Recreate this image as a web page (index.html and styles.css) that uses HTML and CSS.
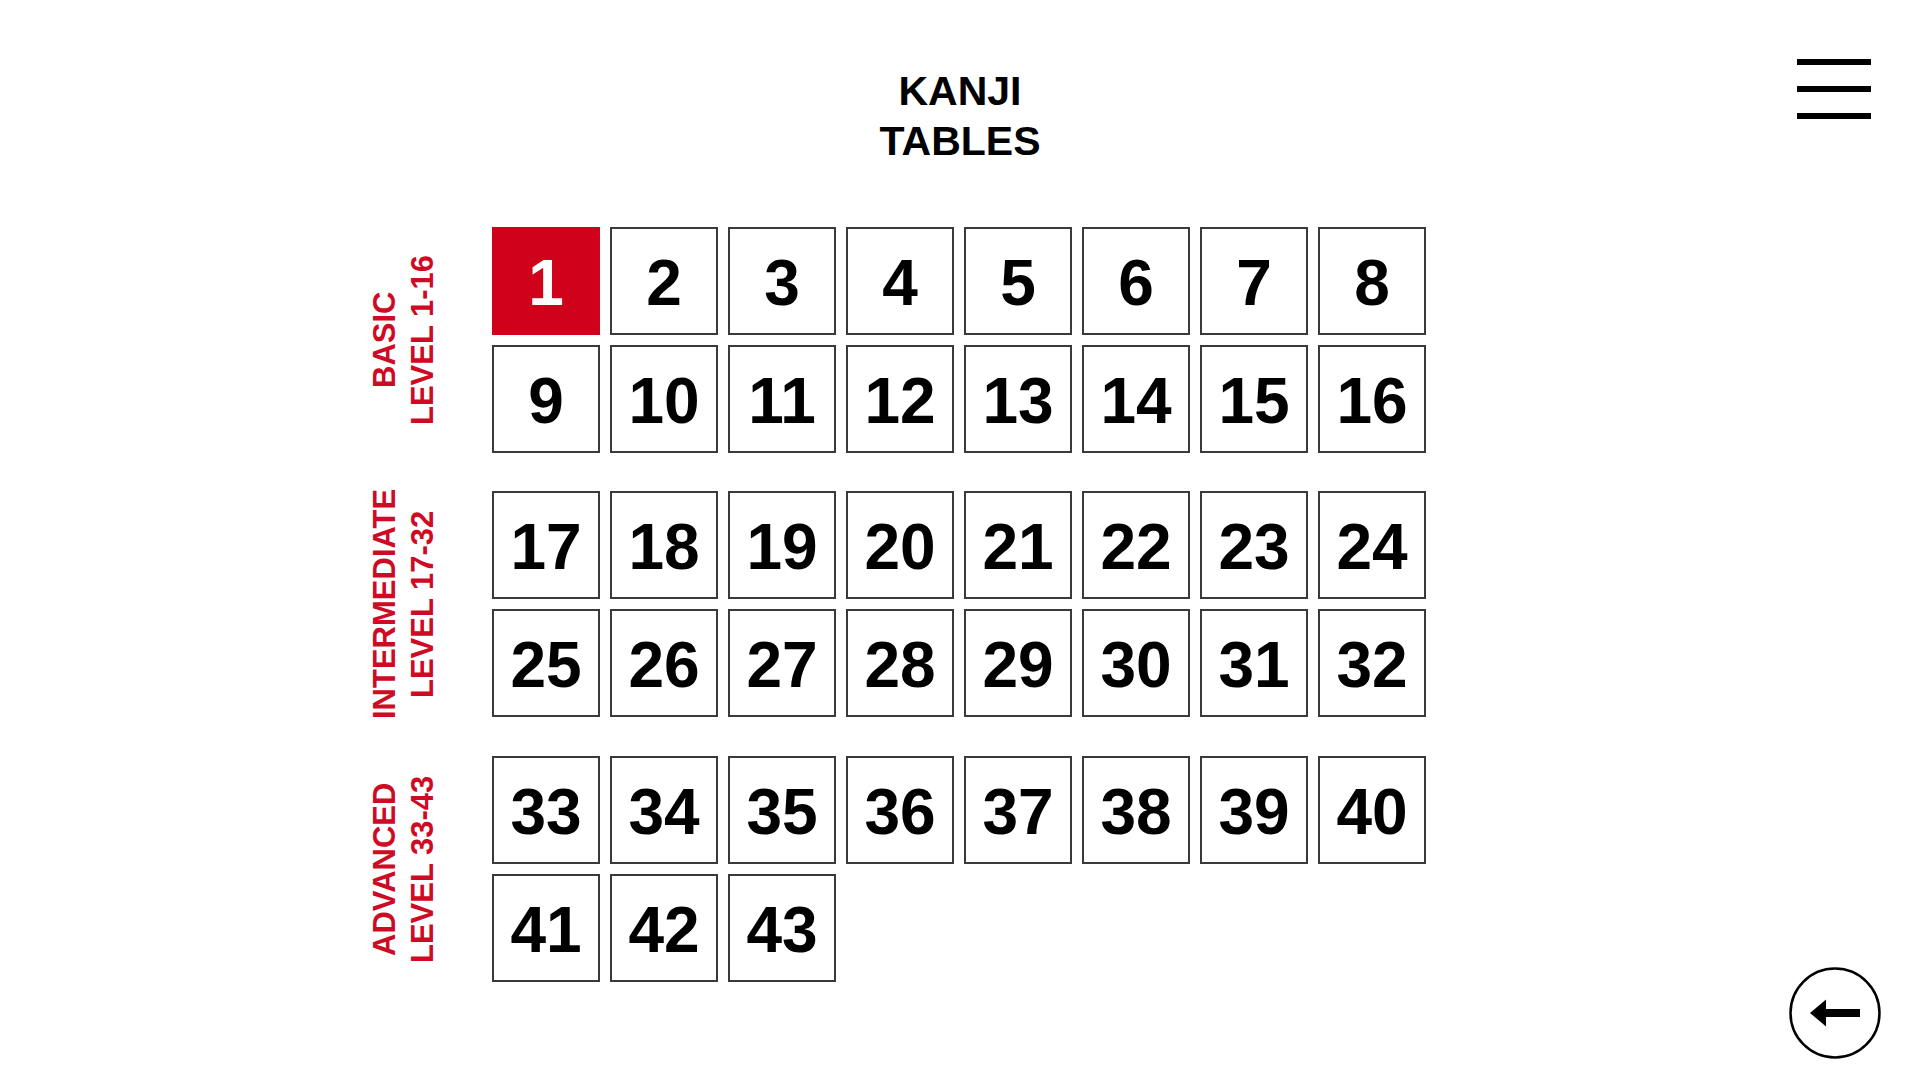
FILE: index.html
```html
<!DOCTYPE html>
<html lang="en">
<head>
<meta charset="utf-8">
<title>Kanji Tables</title>
<link rel="stylesheet" href="styles.css">
</head>
<body>
<header class="top">
  <div class="top-spacer"></div>
  <h1 class="title">KANJI<br>TABLES</h1>
  <button class="menu" aria-label="Menu"><span></span><span></span><span></span></button>
</header>
<main class="levels">
  <div class="level-label"><span>BASIC<br>LEVEL 1-16</span></div>
  <div class="tiles">
    <a class="tile active">1</a><a class="tile">2</a><a class="tile">3</a><a class="tile">4</a><a class="tile">5</a><a class="tile">6</a><a class="tile">7</a><a class="tile">8</a>
    <a class="tile">9</a><a class="tile">10</a><a class="tile">11</a><a class="tile">12</a><a class="tile">13</a><a class="tile">14</a><a class="tile">15</a><a class="tile">16</a>
  </div>
  <div class="level-label"><span>INTERMEDIATE<br>LEVEL 17-32</span></div>
  <div class="tiles">
    <a class="tile">17</a><a class="tile">18</a><a class="tile">19</a><a class="tile">20</a><a class="tile">21</a><a class="tile">22</a><a class="tile">23</a><a class="tile">24</a>
    <a class="tile">25</a><a class="tile">26</a><a class="tile">27</a><a class="tile">28</a><a class="tile">29</a><a class="tile">30</a><a class="tile">31</a><a class="tile">32</a>
  </div>
  <div class="level-label"><span>ADVANCED<br>LEVEL 33-43</span></div>
  <div class="tiles">
    <a class="tile">33</a><a class="tile">34</a><a class="tile">35</a><a class="tile">36</a><a class="tile">37</a><a class="tile">38</a><a class="tile">39</a><a class="tile">40</a>
    <a class="tile">41</a><a class="tile">42</a><a class="tile">43</a>
  </div>
</main>
<button class="back" aria-label="Back">
  <svg width="92" height="92" viewBox="0 0 92 92">
    <circle cx="46" cy="46" r="44.5" fill="#fff" stroke="#000" stroke-width="2.5"/>
    <polygon points="21,46 37,32.5 37,59.5" fill="#000"/>
    <rect x="36" y="42" width="35" height="8" fill="#000"/>
  </svg>
</button>
</body>
</html>
```

FILE: styles.css
```css
html, body {
  margin: 0;
  padding: 0;
  background: #fff;
}

body {
  font-family: "Liberation Sans", Arial, sans-serif;
  color: #000;
  width: 1920px;
  height: 1080px;
  overflow: hidden;
}

.top {
  display: grid;
  grid-template-columns: 1fr auto 1fr;
  padding: 59px 49px 0;
  align-items: start;
}

.title {
  margin: 7px 0 0;
  font-size: 41px;
  line-height: 50px;
  font-weight: 700;
  text-align: center;
}

.menu {
  justify-self: end;
  display: flex;
  flex-direction: column;
  gap: 21px;
  width: 74px;
  padding: 0;
  margin: 0;
  border: 0;
  background: transparent;
  cursor: pointer;
}

.menu span {
  display: block;
  height: 6px;
  background: #000;
}

.levels {
  display: grid;
  grid-template-columns: 1fr auto 1fr;
  grid-auto-rows: 226px;
  row-gap: 38.5px;
  margin-top: 60.5px;
  padding-right: 2px;
}

.level-label {
  grid-column: 1;
  justify-self: end;
  margin-right: 50px;
  display: flex;
  justify-content: center;
  writing-mode: vertical-rl;
  transform: rotate(180deg);
  color: #cf0a24;
  font-size: 31px;
  line-height: 38px;
  font-weight: 700;
}

.level-label span {
  display: block;
  flex: none;
  text-align: center;
}

.tiles {
  grid-column: 2;
  display: grid;
  grid-template-columns: repeat(8, 108px);
  grid-auto-rows: 108px;
  gap: 10px;
}

.tile {
  box-sizing: border-box;
  display: flex;
  align-items: center;
  justify-content: center;
  padding-top: 4px;
  border: 2px solid #3a3a3a;
  background: #fff;
  color: #000;
  font-size: 64px;
  font-weight: 700;
  text-decoration: none;
}

.tile.active {
  background: #d0021b;
  border-color: #d0021b;
  color: #fff;
}

.back {
  position: fixed;
  right: 39px;
  bottom: 21px;
  width: 92px;
  height: 92px;
  padding: 0;
  border: 0;
  background: transparent;
  cursor: pointer;
}

.back svg {
  display: block;
}
```
